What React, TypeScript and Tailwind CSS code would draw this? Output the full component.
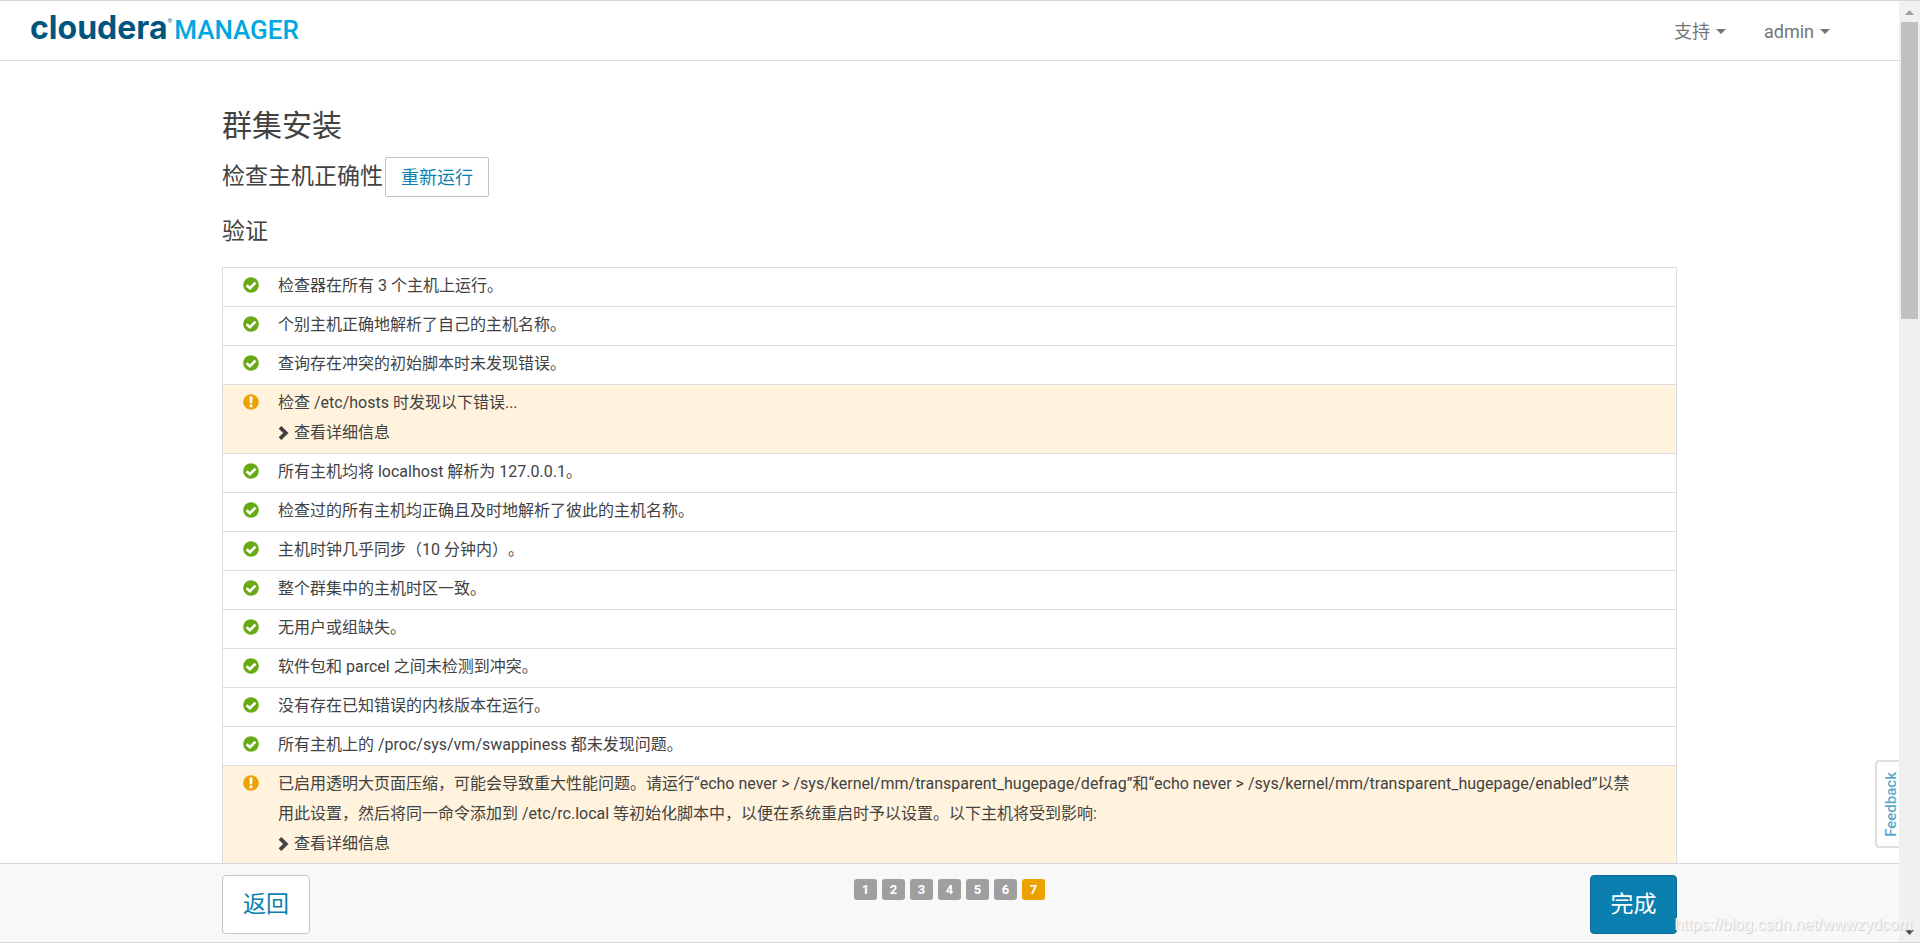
import type { ReactNode } from "react";

type Row = { ok: boolean; text: string };

const rows: Row[] = [
  { ok: true, text: "检查器在所有 3 个主机上运行。" },
  { ok: true, text: "个别主机正确地解析了自己的主机名称。" },
  { ok: true, text: "查询存在冲突的初始脚本时未发现错误。" },
  { ok: false, text: "检查 /etc/hosts 时发现以下错误..." },
  { ok: true, text: "所有主机均将 localhost 解析为 127.0.0.1。" },
  { ok: true, text: "检查过的所有主机均正确且及时地解析了彼此的主机名称。" },
  { ok: true, text: "主机时钟几乎同步（10 分钟内）。" },
  { ok: true, text: "整个群集中的主机时区一致。" },
  { ok: true, text: "无用户或组缺失。" },
  { ok: true, text: "软件包和 parcel 之间未检测到冲突。" },
  { ok: true, text: "没有存在已知错误的内核版本在运行。" },
  { ok: true, text: "所有主机上的 /proc/sys/vm/swappiness 都未发现问题。" },
  {
    ok: false,
    text: "已启用透明大页面压缩，可能会导致重大性能问题。请运行“echo never > /sys/kernel/mm/transparent_hugepage/defrag”和“echo never > /sys/kernel/mm/transparent_hugepage/enabled”以禁用此设置，然后将同一命令添加到 /etc/rc.local 等初始化脚本中，以便在系统重启时予以设置。以下主机将受到影响:",
  },
];

function OkIcon() {
  return (
    <svg viewBox="0 0 16 16" className="size-4" aria-hidden="true">
      <circle cx="8" cy="8" r="7.8" fill="#67aa12" />
      <path d="M3.6 8.2 6.9 11.2 12.5 5.600" fill="none" stroke="#fff" strokeWidth="2.700" />
    </svg>
  );
}

function WarnIcon() {
  return (
    <svg viewBox="0 0 16 16" className="size-4" aria-hidden="true">
      <circle cx="8" cy="8" r="7.8" fill="#eca203" />
      <path d="M6.500 2.6h3l-.3 6.6H6.800zM6.600 10.6h2.800v2.600H6.600z" fill="#fff" />
    </svg>
  );
}

function Chevron() {
  return (
    <svg viewBox="0 0 11 14" className="h-3.5 w-[11px]" aria-hidden="true">
      <path d="M2 1.3 7.8 7 2 12.7" fill="none" stroke="#424242" strokeWidth="3.8" />
    </svg>
  );
}

function NavMenu({ children }: { children: ReactNode }) {
  return (
    <button type="button" className="flex items-center gap-1.5 text-lg text-[#757575]">
      {children}
      <svg viewBox="0 0 10 5" className="h-[5px] w-2.5" aria-hidden="true">
        <path d="M0 0h10L5 5z" fill="#757575" />
      </svg>
    </button>
  );
}

export default function App() {
  return (
    <div className="flex h-screen overflow-hidden border-y border-[#d6d6da] bg-white font-['Roboto','Noto_Sans_CJK_SC',sans-serif] text-[#424242] [text-spacing-trim:space-all]">
      <div className="relative flex min-w-0 flex-1 flex-col">
        <header className="flex h-[60px] shrink-0 items-center justify-between border-b border-[#dcdcdc] pr-[69px] pl-[30px]">
          <a href="#" className="flex items-baseline pb-1">
            <span className="font-['Inter',sans-serif] text-[32px] leading-10 font-bold text-[#00557f]">cloudera</span>
            <span className="self-start pt-2 text-[6px] text-[#00557f]">®</span>
            <span className="pl-0.5 text-[26px] leading-10 font-medium text-[#00a7e1]">MANAGER</span>
          </a>
          <nav className="flex items-center gap-[38px] pt-0.5">
            <NavMenu>支持</NavMenu>
            <NavMenu>admin</NavMenu>
          </nav>
        </header>

        <main className="min-h-0 flex-1 overflow-hidden">
          <div className="mx-auto max-w-[1455px] pt-[45px]">
            <h1 className="text-3xl leading-10">群集安装</h1>
            <div className="mt-[11px] flex items-center gap-0.5">
              <h2 className="text-[23px] leading-10">检查主机正确性</h2>
              <button
                type="button"
                className="h-10 rounded-xs border border-[#c4c4c4] bg-white px-[15px] pt-0.5 text-lg text-[#0b7fad]"
              >
                重新运行
              </button>
            </div>
            <h3 className="mt-[15px] text-[23px] leading-10">验证</h3>

            <ul className="mt-[15px] border border-b-0 border-[#dcdcdc]">
              {rows.map((row) => (
                <li
                  key={row.text}
                  className={
                    row.ok
                      ? "flex gap-[19px] border-b border-[#dcdcdc] pt-[3px] pr-9 pb-[5px] pl-5"
                      : "flex gap-[19px] border-b border-[#dcdcdc] bg-[#fff3dd] pt-[3px] pr-9 pb-[5px] pl-5"
                  }
                >
                  <span className="pt-1.5">{row.ok ? <OkIcon /> : <WarnIcon />}</span>
                  <div className="min-w-0 flex-1 text-base leading-[30px]">
                    <p>{row.text}</p>
                    {!row.ok && (
                      <button type="button" className="flex items-center gap-[5px]">
                        <Chevron />
                        查看详细信息
                      </button>
                    )}
                  </div>
                </li>
              ))}
            </ul>
          </div>
        </main>

        <footer className="h-[79px] shrink-0 border-t border-[#d6d6da] bg-[#f8f8f8]">
          <div className="mx-auto grid max-w-[1455px] grid-cols-3 items-start pt-[11px]">
            <button
              type="button"
              className="h-[59px] w-[88px] justify-self-start rounded border border-[#c4c4c4] bg-white pt-0.5 text-[23px] text-[#0b7fad]"
            >
              返回
            </button>
            <ol className="flex gap-[5px] justify-self-center pt-1">
              {[1, 2, 3, 4, 5, 6, 7].map((n) => (
                <li
                  key={n}
                  className={
                    n === 7
                      ? "h-[21px] w-[23px] rounded-[3px] bg-[#eba100] text-center text-[13px] leading-[21px] font-bold text-white"
                      : "h-[21px] w-[23px] rounded-[3px] bg-[#9f9f9f] text-center text-[13px] leading-[21px] font-bold text-white"
                  }
                >
                  {n}
                </li>
              ))}
            </ol>
            <button
              type="button"
              className="h-[59px] w-[87px] justify-self-end rounded border border-[#0a6b92] bg-[#0b7fb0] pt-0.5 text-[23px] text-white"
            >
              完成
            </button>
          </div>
        </footer>

        <button
          type="button"
          className="absolute right-0 bottom-[94px] flex h-[88px] w-6 items-center justify-center rounded-l border-2 border-r-0 border-[#dfdfdf] bg-white pl-1.5 text-[15px] font-medium text-[#5aa9c9]"
        >
          <span className="rotate-180 [writing-mode:vertical-rl]">Feedback</span>
        </button>
      </div>

      <div className="flex w-[21px] shrink-0 flex-col items-center justify-between bg-[#f0f0f0]">
        <div className="flex flex-col items-center">
          <svg viewBox="0 0 9 5" className="mt-[9px] mb-[7px] h-[5px] w-[9px]" aria-hidden="true">
            <path d="M0 5h9L4.500 0z" fill="#a0a0a0" />
          </svg>
          <div className="h-[297px] w-[17px] bg-[#c1c1c1]" />
        </div>
        <svg viewBox="0 0 9 5" className="mb-[7px] h-[5px] w-[9px]" aria-hidden="true">
          <path d="M0 0h9L4.500 5z" fill="#505050" />
        </svg>
      </div>

      <p className="absolute right-2 bottom-1.5 font-['Liberation_Sans',sans-serif] text-base text-[#f6f6f6] [text-shadow:1px_1px_1px_#ccc]">
        https://blog.csdn.net/wwwzydcom
      </p>
    </div>
  );
}
